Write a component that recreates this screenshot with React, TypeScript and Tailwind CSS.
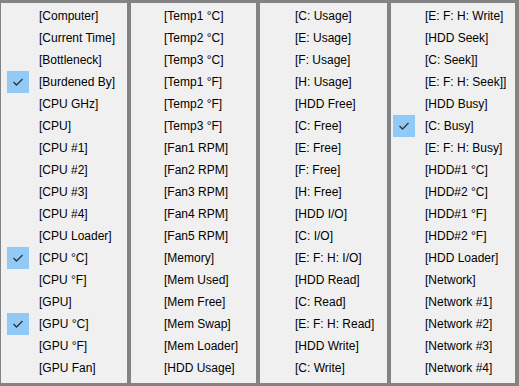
import React from "react";

type Item = { label: string; checked?: boolean };

const columns: { pad: string; width: string; items: Item[] }[] = [
  {
    pad: "pl-[6px]",
    width: "w-[126px]",
    items: [
      { label: "[Computer]" },
      { label: "[Current Time]" },
      { label: "[Bottleneck]" },
      { label: "[Burdened By]", checked: true },
      { label: "[CPU GHz]" },
      { label: "[CPU]" },
      { label: "[CPU #1]" },
      { label: "[CPU #2]" },
      { label: "[CPU #3]" },
      { label: "[CPU #4]" },
      { label: "[CPU Loader]" },
      { label: "[CPU °C]", checked: true },
      { label: "[CPU °F]" },
      { label: "[GPU]" },
      { label: "[GPU °C]", checked: true },
      { label: "[GPU °F]" },
      { label: "[GPU Fan]" },
    ],
  },
  {
    pad: "pl-[1px]",
    width: "w-[125px]",
    items: [
      { label: "[Temp1 °C]" },
      { label: "[Temp2 °C]" },
      { label: "[Temp3 °C]" },
      { label: "[Temp1 °F]" },
      { label: "[Temp2 °F]" },
      { label: "[Temp3 °F]" },
      { label: "[Fan1 RPM]" },
      { label: "[Fan2 RPM]" },
      { label: "[Fan3 RPM]" },
      { label: "[Fan4 RPM]" },
      { label: "[Fan5 RPM]" },
      { label: "[Memory]" },
      { label: "[Mem Used]" },
      { label: "[Mem Free]" },
      { label: "[Mem Swap]" },
      { label: "[Mem Loader]" },
      { label: "[HDD Usage]" },
    ],
  },
  {
    pad: "pl-[3px]",
    width: "w-[127px]",
    items: [
      { label: "[C: Usage]" },
      { label: "[E: Usage]" },
      { label: "[F: Usage]" },
      { label: "[H: Usage]" },
      { label: "[HDD Free]" },
      { label: "[C: Free]" },
      { label: "[E: Free]" },
      { label: "[F: Free]" },
      { label: "[H: Free]" },
      { label: "[HDD I/O]" },
      { label: "[C: I/O]" },
      { label: "[E: F: H: I/O]" },
      { label: "[HDD Read]" },
      { label: "[C: Read]" },
      { label: "[E: F: H: Read]" },
      { label: "[HDD Write]" },
      { label: "[C: Write]" },
    ],
  },
  {
    pad: "pl-[2px]",
    width: "w-[124px]",
    items: [
      { label: "[E: F: H: Write]" },
      { label: "[HDD Seek]" },
      { label: "[C: Seek]]" },
      { label: "[E: F: H: Seek]]" },
      { label: "[HDD Busy]" },
      { label: "[C: Busy]", checked: true },
      { label: "[E: F: H: Busy]" },
      { label: "[HDD#1 °C]" },
      { label: "[HDD#2 °C]" },
      { label: "[HDD#1 °F]" },
      { label: "[HDD#2 °F]" },
      { label: "[HDD Loader]" },
      { label: "[Network]" },
      { label: "[Network #1]" },
      { label: "[Network #2]" },
      { label: "[Network #3]" },
      { label: "[Network #4]" },
    ],
  },
];

function Check() {
  return (
    <svg width="22" height="22" viewBox="0 0 22 22">
      <path d="M6.5 11 L9.5 14 L15.5 8" fill="none" stroke="#333" strokeWidth="1.3" />
    </svg>
  );
}

export default function App() {
  return (
    <div
      className="w-[519px] h-[386px] bg-[#838383] flex gap-[4px] pt-[3px] pb-[3px] pl-[1px] pr-[4px] text-[12px] text-black"
      style={{ fontFamily: '"Liberation Sans", Arial, sans-serif' }}
    >
      {columns.map((col, i) => (
        <div key={i} className={`${col.width} ${col.pad} bg-[#f0f0f0] pt-[2px]`}>
          {col.items.map((item) => (
            <div key={item.label} className="h-[22px] flex items-center">
              <div className={`w-[22px] h-[22px] shrink-0 ${item.checked ? "bg-[#91c9f7]" : ""}`}>
                {item.checked && <Check />}
              </div>
              <span className="ml-[10px] whitespace-nowrap">{item.label}</span>
            </div>
          ))}
        </div>
      ))}
    </div>
  );
}
